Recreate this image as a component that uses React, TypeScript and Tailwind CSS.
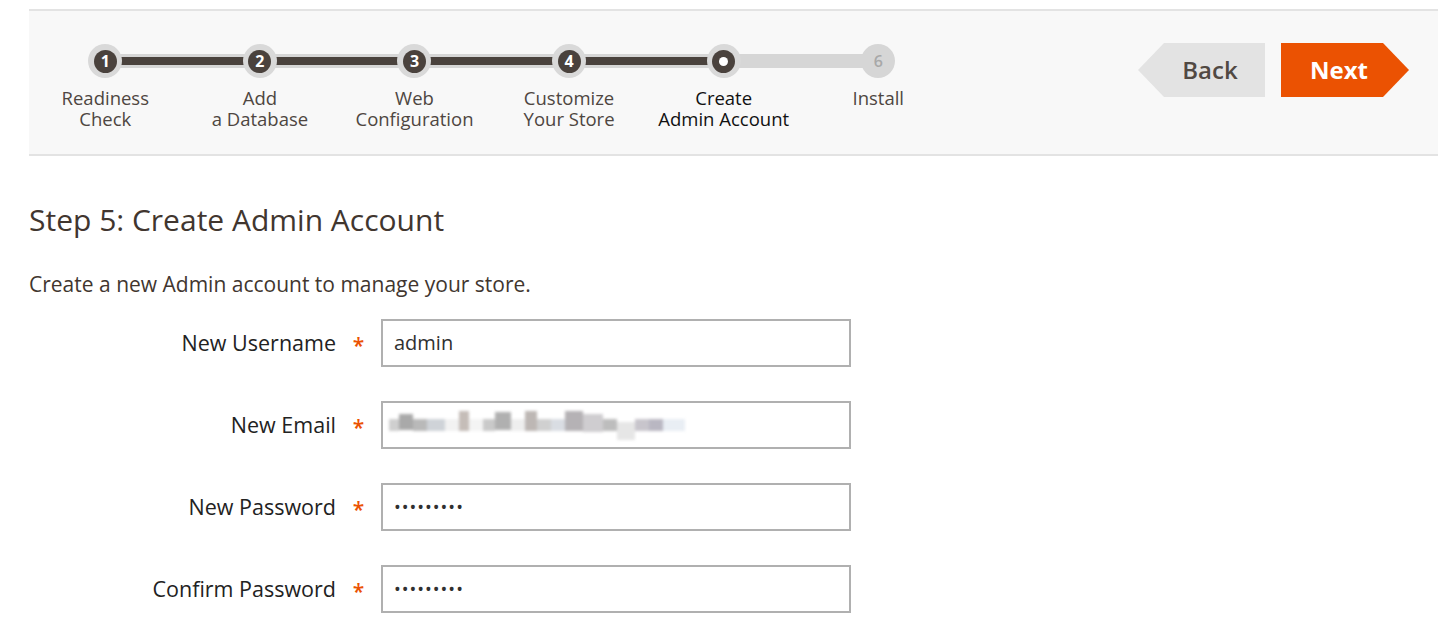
import React from "react";

const steps = [
  { n: "1", l1: "Readiness", l2: "Check", state: "done" },
  { n: "2", l1: "Add", l2: "a Database", state: "done" },
  { n: "3", l1: "Web", l2: "Configuration", state: "done" },
  { n: "4", l1: "Customize", l2: "Your Store", state: "done" },
  { n: "5", l1: "Create", l2: "Admin Account", state: "active" },
  { n: "6", l1: "Install", l2: "", state: "todo" },
];

function Circle({ n, state }: { n: string; state: string }) {
  if (state === "todo") {
    return (
      <div className="w-[34px] h-[34px] rounded-full bg-[#d6d6d6] flex items-center justify-center text-[16px] font-semibold text-[#a8a8a8]">
        {n}
      </div>
    );
  }
  return (
    <div className="w-[34px] h-[34px] rounded-full bg-[#d9d9d9] flex items-center justify-center">
      <div className="w-[23px] h-[23px] rounded-full bg-[#4a423d] flex items-center justify-center text-[16px] font-bold text-white leading-none">
        {state === "active" ? <div className="w-[9px] h-[9px] rounded-full bg-white" /> : n}
      </div>
    </div>
  );
}

const pixels: { w: number; c: string; h?: number; y?: number }[] = [
  { w: 10, c: "#cfcfcf" },
  { w: 14, c: "#a9a9a9", h: 16, y: -3 },
  { w: 14, c: "#b9b9b9" },
  { w: 18, c: "#cfd3d8" },
  { w: 14, c: "#f2f2f2" },
  { w: 10, c: "#c5bdb8", h: 20, y: -4 },
  { w: 14, c: "#f4f4f4" },
  { w: 12, c: "#c9c9c9" },
  { w: 16, c: "#b0b0b0", h: 18, y: -4 },
  { w: 14, c: "#eeeeee" },
  { w: 12, c: "#bdb7b4", h: 20, y: -4 },
  { w: 14, c: "#d0d0d0" },
  { w: 14, c: "#d9dde3" },
  { w: 18, c: "#b5b2b5", h: 20, y: -4 },
  { w: 20, c: "#cfcdd0", h: 18, y: -2 },
  { w: 14, c: "#bdbdbd" },
  { w: 18, c: "#e6e6e6", h: 18, y: 6 },
  { w: 14, c: "#c8c5cc" },
  { w: 14, c: "#b9b7c2" },
  { w: 22, c: "#e9eef4" },
];

function Field({ label, children }: { label: string; children: React.ReactNode }) {
  return (
    <div className="flex items-center">
      <div className="w-[336px] text-right text-[21.5px] font-normal text-[#222222] leading-[28px]">{label}</div>
      <div className="w-[45px] text-center text-[21px] font-semibold text-[#eb5202] pt-[6px]">*</div>
      <div className="w-[470px] h-[48px] border-2 border-[#b0b0b0] bg-white flex items-center px-[11px] text-[20px] text-[#303030]">
        {children}
      </div>
    </div>
  );
}

export default function App() {
  return (
    <div className="min-h-[641px] bg-white pt-[9px] pl-[29px]" style={{ fontFamily: "'Open Sans', 'Noto Sans', sans-serif" }}>
      {/* progress panel */}
      <div className="w-[1409px] h-[147px] bg-[#f8f8f8] border-t-2 border-b-2 border-[#e3e3e3] flex justify-between">
        <div className="relative ml-[-1px] pt-[33px] grid grid-cols-[repeat(6,154.6px)]">
          <div className="absolute left-[77px] top-[43px] w-[773px] h-[14px] bg-[#d6d6d6] rounded-full" />
          <div className="absolute left-[77px] top-[46px] w-[619px] h-[8px] bg-[#4a423d]" />
          {steps.map((s) => (
            <div key={s.n} className="relative flex flex-col items-center">
              <Circle n={s.n} state={s.state} />
              <div
                className={
                  "mt-[10px] flex flex-col gap-[1px] text-center text-[18.5px] leading-[20px] whitespace-nowrap " +
                  (s.state === "active" ? "text-[#111111] font-medium" : "text-[#4e4641]")
                }
              >
                <span>{s.l1}</span>
                {s.l2 && <span>{s.l2}</span>}
              </div>
            </div>
          ))}
        </div>
        <div className="flex items-start gap-[16px] pt-[32px] pr-[29px]">
          <div className="w-[127px] h-[54px] bg-[#e3e3e3] [clip-path:polygon(26px_0,100%_0,100%_100%,26px_100%,0_50%)] flex items-center justify-center pl-[17px] text-[24px] font-semibold text-[#514943]">
            Back
          </div>
          <div className="w-[128px] h-[54px] bg-[#eb5202] [clip-path:polygon(0_0,calc(100%-26px)_0,100%_50%,calc(100%-26px)_100%,0_100%)] flex items-center justify-center pr-[12px] text-[24px] font-bold text-white">
            Next
          </div>
        </div>
      </div>

      {/* content */}
      <h1 className="mt-[46px] text-[30px] font-normal leading-[36px] text-[#41362f]">Step 5: Create Admin Account</h1>
      <p className="mt-[33px] text-[21px] leading-[26px] text-[#41362f]">Create a new Admin account to manage your store.</p>

      <div className="mt-[22px] flex flex-col gap-[34px] ml-[-29px]">
        <Field label="New Username">admin</Field>
        <Field label="New Email">
          <div className="flex items-center blur-[1.5px] ml-[-5px]">
            {pixels.map((p, i) => (
              <div
                key={i}
                style={{ width: p.w, height: p.h ?? 12, backgroundColor: p.c, transform: `translateY(${p.y ?? 0}px)` }}
              />
            ))}
          </div>
        </Field>
        <Field label="New Password">
          <span className="tracking-[1px] text-[18px]">•••••••••</span>
        </Field>
        <Field label="Confirm Password">
          <span className="tracking-[1px] text-[18px]">•••••••••</span>
        </Field>
      </div>
    </div>
  );
}
